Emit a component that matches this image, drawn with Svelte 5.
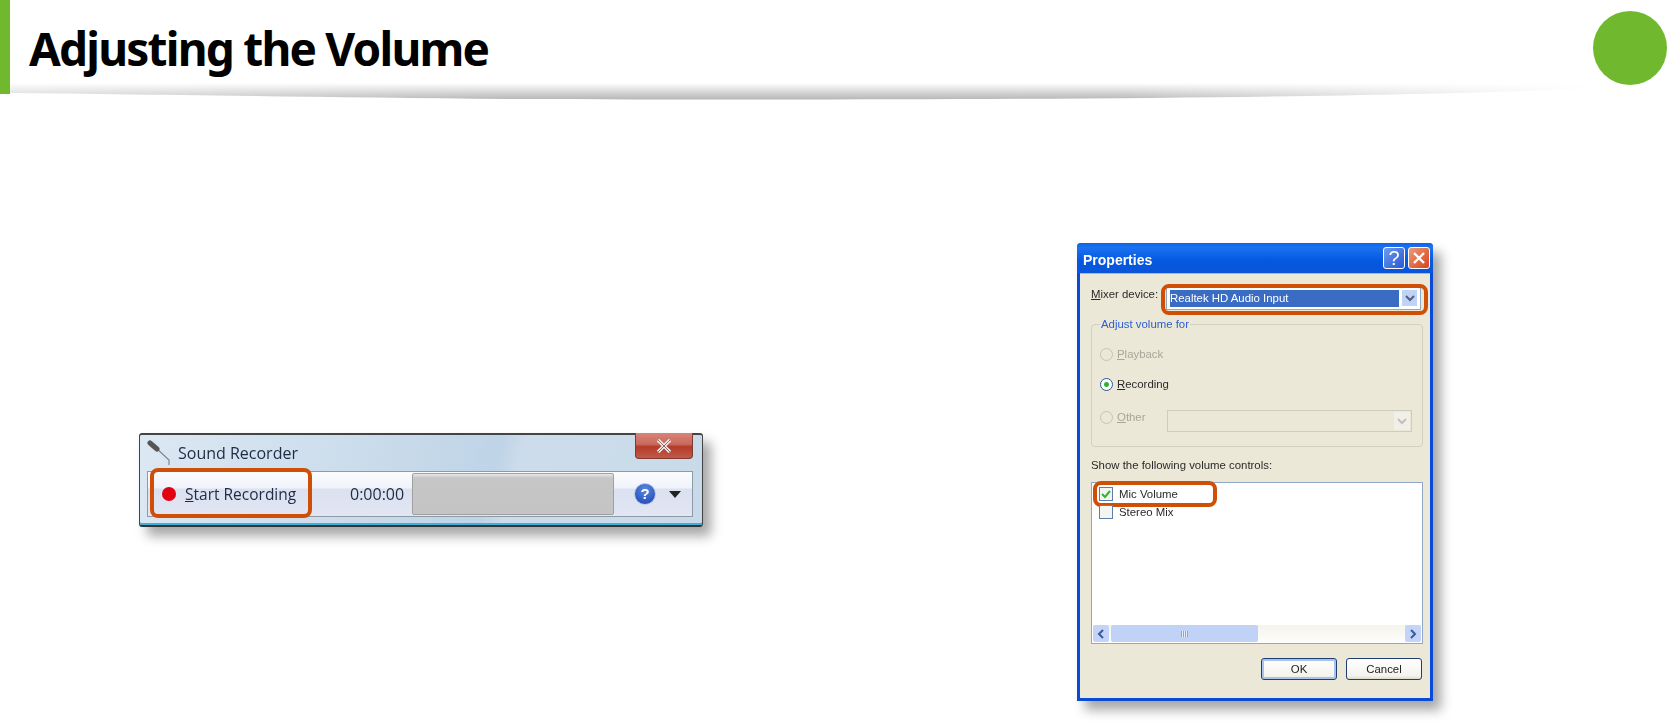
<script>
  const soundRecorderTime = '0:00:00'
</script>

<div class="page">
  <header class="head">
    <div class="head-bar"></div>
    <h1>Adjusting the Volume</h1>
    <div class="head-dot"></div>
    <svg class="head-shadow" width="1590" height="18" viewBox="0 0 1590 18" aria-hidden="true">
      <defs>
        <linearGradient id="fade" x1="0" x2="1" y1="0" y2="0">
          <stop offset="0" stop-color="#fff" stop-opacity="0.4" />
          <stop offset="0.3" stop-color="#fff" stop-opacity="0" />
          <stop offset="0.7" stop-color="#fff" stop-opacity="0" />
          <stop offset="1" stop-color="#fff" stop-opacity="1" />
        </linearGradient>
        <linearGradient id="shade" gradientUnits="userSpaceOnUse" x1="0" x2="0" y1="0" y2="17">
          <stop offset="0" stop-color="#fff" />
          <stop offset="1" stop-color="#b4b4b4" />
        </linearGradient>
      </defs>
      <path d="M0 0H1590V5C1400 14 1000 18 500 16C300 14 100 11 0 10Z" fill="url(#shade)" />
      <rect width="1590" height="18" fill="url(#fade)" />
    </svg>
  </header>

  <main class="shots">
    <section class="recorder">
      <div class="rec-title">
        <svg class="mic" width="26" height="26" viewBox="0 0 26 26">
          <path d="M8 7L22 20V25" fill="none" stroke="#7b8794" stroke-width="1.2" />
          <path d="M3 3L10 9" stroke="#565656" stroke-width="5" stroke-linecap="round" />
        </svg>
        <span>Sound Recorder</span>
        <div class="rec-close">
          <svg width="16" height="14" viewBox="0 0 16 14">
            <path d="M2 1L14 13M14 1L2 13" stroke="#eee" stroke-width="3.4" />
            <path d="M2 1L14 13M14 1L2 13" stroke="#8a6a60" stroke-width="1" />
          </svg>
        </div>
      </div>
      <div class="rec-panel">
        <div class="rec-start">
          <i class="rec-dot"></i>
          <span><u>S</u>tart Recording</span>
          <b class="mark"></b>
        </div>
        <span class="rec-time">{soundRecorderTime}</span>
        <div class="rec-meter"></div>
        <div class="rec-help">?</div>
        <svg class="rec-arrow" width="12" height="7" viewBox="0 0 12 7"><path d="M0 0H12L6 7Z" fill="#222" /></svg>
      </div>
    </section>

    <section class="dialog">
      <div class="dlg-title">
        <span>Properties</span>
        <div class="dlg-btn help">?</div>
        <div class="dlg-btn close">
          <svg width="14" height="14" viewBox="0 0 14 14"><path d="M2 2L12 12M12 2L2 12" stroke="#fff" stroke-width="2.4" /></svg>
        </div>
      </div>
      <div class="dlg-body">
        <div class="mixer">
          <span><u>M</u>ixer device:</span>
          <div class="mixer-select">
            <div class="mixer-value">Realtek HD Audio Input</div>
            <div class="drop"><svg width="10" height="7" viewBox="0 0 10 7"><path d="M1 1L5 5L9 1" fill="none" stroke="#4d6185" stroke-width="2" /></svg></div>
            <b class="mark"></b>
          </div>
        </div>

        <fieldset class="group">
          <legend>Adjust volume for</legend>
          <div class="radio off"><i></i><span><u>P</u>layback</span></div>
          <div class="radio on"><i></i><span><u>R</u>ecording</span></div>
          <div class="radio off other">
            <i></i><span><u>O</u>ther</span>
            <div class="other-select">
              <div class="drop dim"><svg width="10" height="7" viewBox="0 0 10 7"><path d="M1 1L5 5L9 1" fill="none" stroke="#c0c0b8" stroke-width="2" /></svg></div>
            </div>
          </div>
        </fieldset>

        <p class="show">Show the following volume controls:</p>

        <div class="list">
          <div class="list-rows">
            <div class="row mic-row">
              <i class="check"><svg width="10" height="9" viewBox="0 0 10 9"><path d="M1 4L4 7L9 1" fill="none" stroke="#2fb52f" stroke-width="2" /></svg></i>
              <span>Mic Volume</span>
              <b class="mark"></b>
            </div>
            <div class="row"><i class="check"></i><span>Stereo Mix</span></div>
          </div>
          <div class="scroll">
            <div class="sc-btn"><svg width="8" height="10" viewBox="0 0 8 10"><path d="M6 1L2 5L6 9" fill="none" stroke="#3a5a9a" stroke-width="2" /></svg></div>
            <div class="sc-thumb"><span></span></div>
            <div class="sc-btn"><svg width="8" height="10" viewBox="0 0 8 10"><path d="M2 1L6 5L2 9" fill="none" stroke="#3a5a9a" stroke-width="2" /></svg></div>
          </div>
        </div>

        <div class="actions">
          <div class="btn ok">OK</div>
          <div class="btn">Cancel</div>
        </div>
      </div>
    </section>
  </main>
</div>

<style>
  :global(body) {
    background: #fff;
  }

  .page {
    width: 1667px;
    height: 725px;
    overflow: hidden;
    position: relative;
    background: #fff;
  }

  .head {
    height: 94px;
    display: flex;
    align-items: flex-start;
    position: relative;
  }
  .head-bar {
    width: 10px;
    height: 94px;
    background: #70b92f;
  }
  h1 {
    margin: 14px 0 0 19px;
    font: 700 46px/68px "Noto Sans", sans-serif;
    letter-spacing: -1.8px;
    color: #000;
  }
  .head-dot {
    width: 74px;
    height: 74px;
    border-radius: 50%;
    background: #70b92f;
    margin: 11px 0 0 auto;
  }
  .head-shadow {
    position: absolute;
    left: 10px;
    top: 83px;
  }

  .shots {
    display: flex;
    align-items: flex-start;
    padding: 149px 0 0 139px;
  }

  .recorder {
    width: 564px;
    height: 94px;
    margin-top: 190px;
    box-sizing: border-box;
    border: 1px solid #444;
    border-top-width: 2px;
    border-bottom: 2px solid #333;
    border-radius: 3px;
    background: linear-gradient(105deg, #dce8f3 0%, #c8daea 45%, #bed4e7 62%, #cddcea 66%, #c8dae9 100%);
    box-shadow: 8px 9px 12px rgba(0, 0, 0, 0.35), inset 0 -2px 0 #3ab2de;
    padding: 0 9px 8px 7px;
    filter: blur(0.4px);
    font-family: "Open Sans", sans-serif;
    color: #1f2a44;
  }
  .rec-title {
    height: 36px;
    display: flex;
    align-items: center;
    gap: 5px;
    font-size: 16px;
  }
  .mic {
    margin-bottom: 1px;
    width: 26px;
  }
  .rec-close {
    margin: -2px 0 auto auto;
    width: 58px;
    height: 26px;
    box-sizing: border-box;
    border: 1px solid #7d3a30;
    border-top: none;
    border-radius: 0 0 4px 4px;
    background: linear-gradient(#d88478 0%, #c86a5c 45%, #b43a28 55%, #c05a48 100%);
    display: flex;
    align-items: center;
    justify-content: center;
  }
  .rec-panel {
    height: 46px;
    box-sizing: border-box;
    border: 1px solid #8f9aa8;
    background: linear-gradient(#fbfcfe 0%, #f0f3fa 35%, #dbe1f0 40%, #e2e6f3 100%);
    display: flex;
    align-items: center;
    padding-left: 4px;
  }
  .rec-start {
    position: relative;
    width: 160px;
    height: 100%;
    box-sizing: border-box;
    display: flex;
    align-items: center;
    gap: 9px;
    padding-left: 10px;
    font-size: 15.5px;
  }
  .rec-dot {
    width: 14px;
    height: 14px;
    border-radius: 50%;
    background: #e00012;
  }
  .mark {
    position: absolute;
    box-sizing: border-box;
    border: 4px solid #cf4f07;
    border-radius: 8px;
    pointer-events: none;
  }
  .rec-start .mark {
    inset: -4px 0 -2px -2px;
  }
  .rec-time {
    margin-left: 38px;
    font-size: 16px;
  }
  .rec-meter {
    width: 202px;
    height: 42px;
    margin-left: 8px;
    box-sizing: border-box;
    border: 1px solid #a0a0a0;
    border-radius: 2px;
    background: linear-gradient(#e8e8e8 0, #c6c6c6 4px, #c4c4c4 100%);
  }
  .rec-help {
    width: 22px;
    height: 22px;
    margin-left: 20px;
    border-radius: 50%;
    box-sizing: border-box;
    border: 1px solid #b8c8e8;
    background: radial-gradient(circle at 50% 30%, #5a8ae0, #1c3fb0);
    color: #fff;
    font: 700 15px/20px "Liberation Sans", sans-serif;
    text-align: center;
  }
  .rec-arrow {
    margin-left: 13px;
  }

  .dialog {
    width: 356px;
    height: 458px;
    margin-left: 374px;
    box-sizing: border-box;
    background: #0a4ad8;
    border-radius: 4px 4px 0 0;
    padding: 0 3px 3px;
    box-shadow: 8px 9px 12px rgba(0, 0, 0, 0.35);
    filter: blur(0.4px);
    font: 11.4px "Liberation Sans", sans-serif;
    color: #2a2a2a;
  }
  .dlg-title {
    height: 30px;
    display: flex;
    align-items: center;
    gap: 3px;
    color: #fff;
    font: 700 14px "Liberation Sans", sans-serif;
    background: linear-gradient(#0d63e8 0%, #1a72f0 15%, #0458e0 60%, #0a55d8 100%);
    margin: 0 -3px;
    padding: 0 3px 0 6px;
    border-radius: 4px 4px 0 0;
  }
  .dlg-title span {
    margin: 3px auto 0 0;
  }
  .dlg-btn {
    width: 22px;
    height: 22px;
    box-sizing: border-box;
    border: 1px solid #fff;
    border-radius: 3px;
    display: flex;
    align-items: center;
    justify-content: center;
  }
  .help {
    background: linear-gradient(135deg, #6d9cf0, #2858d0);
    font: 400 20px "Liberation Sans", sans-serif;
  }
  .close {
    background: linear-gradient(135deg, #ec9a78, #d8431c);
  }
  .dlg-body {
    height: 425px;
    box-sizing: border-box;
    background: #ece8d8;
    padding: 9px 6px 0 11px;
    border-top: 1px solid #a8b8d8;
  }
  .mixer {
    display: flex;
    align-items: center;
    height: 31px;
  }
  .mixer > span {
    width: 76px;
    margin-top: -9px;
  }
  .mixer-select {
    position: relative;
    width: 253px;
    height: 21px;
    display: flex;
    gap: 3px;
    background: #fff;
    padding: 2px 3px;
    box-sizing: border-box;
    outline: 1px solid #8fa8c8;
  }
  .mixer-value {
    flex: 1;
    background: #3a6cc4;
    color: #fff;
    line-height: 16px;
  }
  .drop {
    width: 15px;
    height: 16px;
    background: #c0d2f6;
    display: flex;
    align-items: center;
    justify-content: center;
  }
  .mixer-select .mark {
    inset: -4px -8px -6px -6px;
  }

  .group {
    margin: 4px 0 0;
    padding: 17px 0 0 8px;
    height: 129px;
    box-sizing: border-box;
    border: 1px solid #d4d0c0;
    border-radius: 4px;
    min-width: 0;
    width: 332px;
  }
  legend {
    padding: 0 1px;
    color: #2b5fd0;
  }
  .radio {
    display: flex;
    align-items: center;
    gap: 4px;
    height: 14px;
    margin-bottom: 16px;
  }
  .radio.on {
    margin-bottom: 19px;
  }
  .radio i {
    width: 13px;
    height: 13px;
    border-radius: 50%;
    box-sizing: border-box;
    border: 1px solid #c8c4b4;
    background: #ece8d8;
  }
  .radio.off {
    color: #a8a69a;
  }
  .radio.on i {
    border: 1px solid #2a5a98;
    background: radial-gradient(circle, #35b035 0 2px, #fff 3px);
  }
  .other {
    margin: 0;
  }
  .other-select {
    width: 245px;
    height: 22px;
    margin: 8px 0 0 17px;
    box-sizing: border-box;
    border: 1px solid #d0ccbc;
    display: flex;
    justify-content: flex-end;
    align-items: center;
    padding-right: 1px;
  }
  .drop.dim {
    width: 16px;
    height: 18px;
    background: #f0efe8;
  }

  .show {
    margin: 11px 0 10px;
    line-height: 14px;
  }

  .list {
    width: 332px;
    height: 162px;
    box-sizing: border-box;
    border: 1px solid #8fa8c8;
    background: #fff;
    display: flex;
    flex-direction: column;
    padding: 1px;
  }
  .list-rows {
    flex: 1;
    padding: 1px 0 0 6px;
  }
  .row {
    position: relative;
    display: flex;
    align-items: center;
    gap: 6px;
    height: 18px;
  }
  .check {
    width: 14px;
    height: 14px;
    box-sizing: border-box;
    border: 1px solid #5c7ea8;
    background: #f4f4f0;
    display: flex;
    align-items: center;
    justify-content: center;
  }
  .mic-row .mark {
    inset: -4px auto -4px -6px;
    width: 124px;
  }
  .scroll {
    height: 17px;
    display: flex;
    background: linear-gradient(#f4f3ec, #fdfdfb);
  }
  .sc-btn {
    width: 16px;
    height: 17px;
    background: #c4d4f8;
    border-radius: 2px;
    display: flex;
    align-items: center;
    justify-content: center;
  }
  .sc-btn:last-child {
    margin-left: auto;
  }
  .sc-thumb {
    width: 147px;
    margin-left: 2px;
    background: #c0d2f6;
    border-radius: 2px;
    display: flex;
    align-items: center;
    justify-content: center;
  }
  .sc-thumb span {
    width: 7px;
    height: 6px;
    background: repeating-linear-gradient(90deg, #8aa4d8 0 1px, #e8eefa 1px 2px);
  }

  .actions {
    display: flex;
    justify-content: flex-end;
    gap: 9px;
    margin: 14px 2px 0 0;
  }
  .btn {
    width: 76px;
    height: 22px;
    box-sizing: border-box;
    border: 1px solid #1f3f70;
    border-radius: 3px;
    background: linear-gradient(#fff, #f4f3ee 85%, #dcd8cc);
    text-align: center;
    line-height: 20px;
    color: #222;
  }
  .btn.ok {
    box-shadow: inset 0 0 0 2px #a8c4ec;
  }
</style>
